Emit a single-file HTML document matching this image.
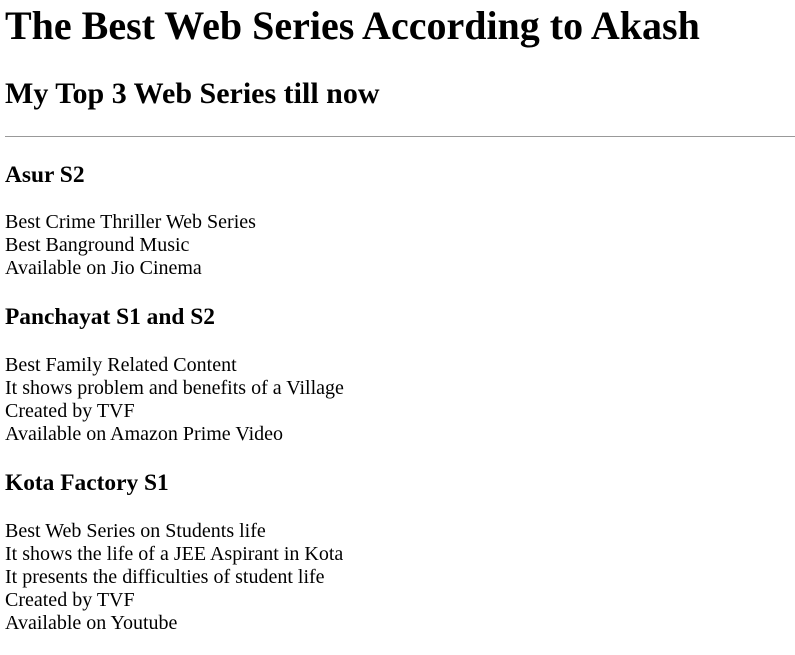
<!DOCTYPE html>
<html><head><meta charset="utf-8"><style>
html,body{margin:0;padding:0;background:#fff;}
body{font-family:"Liberation Serif",serif;color:#000;padding:3px 0 0 5px;width:790px;overflow:hidden;}
h1{font-size:40px;margin:0 0 27.8px 0;line-height:46px;}
h2{font-size:30px;margin:0 0 24.9px 0;line-height:34.5px;}
hr{margin:0;border:0;border-top:1.5px solid #999;height:0;}
h3{font-size:23.4px;margin:24.4px 0 22.4px 0;line-height:27px;}
p{font-size:20px;margin:20px 0;line-height:23px;}
</style></head><body>
<h1>The Best Web Series According to Akash</h1>
<h2>My Top 3 Web Series till now</h2>
<hr>
<h3>Asur S2</h3>
<p>Best Crime Thriller Web Series<br>Best Banground Music<br>Available on Jio Cinema</p>
<h3>Panchayat S1 and S2</h3>
<p>Best Family Related Content<br>It shows problem and benefits of a Village<br>Created by TVF<br>Available on Amazon Prime Video</p>
<h3>Kota Factory S1</h3>
<p>Best Web Series on Students life<br>It shows the life of a JEE Aspirant in Kota<br>It presents the difficulties of student life<br>Created by TVF<br>Available on Youtube</p>
</body></html>
